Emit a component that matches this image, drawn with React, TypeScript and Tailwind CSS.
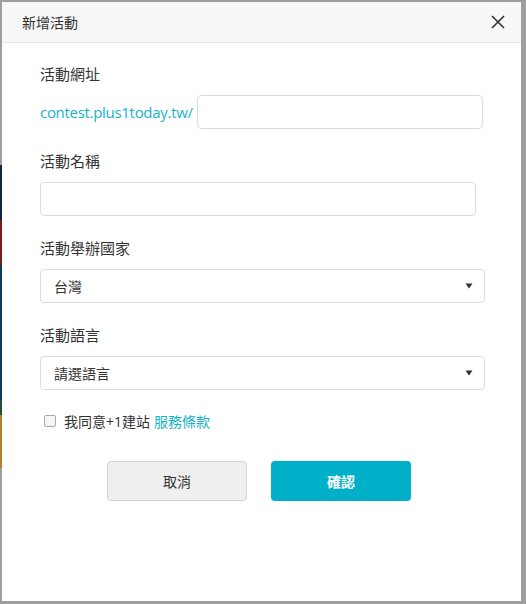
import React from 'react'

const font = { fontFamily: '"Open Sans", "Noto Sans CJK TC", sans-serif' }

function Arrow() {
    return (
        <svg width="8" height="6" viewBox="0 0 8 6" className="shrink-0">
            <path d="M0.5 0.5 H7.5 L4 5.5 Z" fill="#333" />
        </svg>
    )
}

function Field({ label, children }: { label: string; children: React.ReactNode }) {
    return (
        <div className="mb-[22px]">
            <div className="h-[21px] leading-[21px] text-[15px] text-[#333] mb-[10px]">{label}</div>
            {children}
        </div>
    )
}

function SelectBox({ value }: { value: string }) {
    return (
        <div className="w-[445px] h-[34px] border border-[#dddddd] rounded-[4px] flex items-center justify-between pl-[13px] pr-[11px] bg-white">
            <span className="text-[14px] text-[#333]">{value}</span>
            <Arrow />
        </div>
    )
}

export default function App() {
    return (
        <div className="w-[526px] h-[604px] bg-[#9e9e9e] flex overflow-hidden" style={font}>
            {/* page behind the dialog, peeking at the left edge */}
            <div className="w-[2px] flex flex-col shrink-0">
                <div className="h-[165px] bg-[#9e9e9e]" />
                <div className="h-[55px] bg-[#0c2641]" />
                <div className="h-[45px] bg-[#7a1b22]" />
                <div className="h-[135px] bg-[#0b3a5b]" />
                <div className="h-[15px] bg-[#24503a]" />
                <div className="h-[53px] bg-[#b07f2c]" />
            </div>

            <div className="mt-[2px] w-[519px] h-[599px] bg-white flex flex-col shrink-0">
                {/* Header */}
                <div className="h-[41px] bg-[#f7f7f7] border-b border-[#e6e6e6] flex items-center justify-between pl-[20px] pr-[16px]">
                    <span className="text-[14px] text-[#333]">新增活動</span>
                    <svg width="14" height="14" viewBox="0 0 14 14">
                        <path d="M1 1 L13 13 M13 1 L1 13" stroke="#333" strokeWidth="1.6" />
                    </svg>
                </div>

                {/* Body */}
                <div className="pt-[21px] pl-[38px] flex flex-col">
                    <Field label="活動網址">
                        <div className="flex items-center gap-[4px]">
                            <span className="text-[15px] text-[#17b2ca] tracking-[-0.3px]">contest.plus1today.tw/</span>
                            <div className="w-[286px] h-[34px] border border-[#dddddd] rounded-[4px]" />
                        </div>
                    </Field>

                    <Field label="活動名稱">
                        <div className="w-[436px] h-[34px] border border-[#dddddd] rounded-[4px]" />
                    </Field>

                    <Field label="活動舉辦國家">
                        <SelectBox value="台灣" />
                    </Field>

                    <Field label="活動語言">
                        <SelectBox value="請選語言" />
                    </Field>

                    <div className="flex items-center h-[20px] -mt-px pl-[4px]">
                        <div className="w-[12px] h-[12px] border border-[#a9a9a9] rounded-[2px] bg-[#f5f5f5]" />
                        <span className="ml-[8px] text-[14px] text-[#333]">我同意+1建站</span>
                        <span className="ml-[4px] text-[14px] text-[#17b2ca]">服務條款</span>
                    </div>

                    <div className="flex gap-[24px] mt-[30px] pl-[67px]">
                        <button className="w-[140px] h-[40px] bg-[#efefef] border border-[#d4d4d4] rounded-[4px] text-[14px] text-[#333]">
                            取消
                        </button>
                        <button className="w-[140px] h-[40px] bg-[#00b0c8] rounded-[4px] text-[14px] font-bold text-white">
                            確認
                        </button>
                    </div>
                </div>
            </div>
        </div>
    )
}
